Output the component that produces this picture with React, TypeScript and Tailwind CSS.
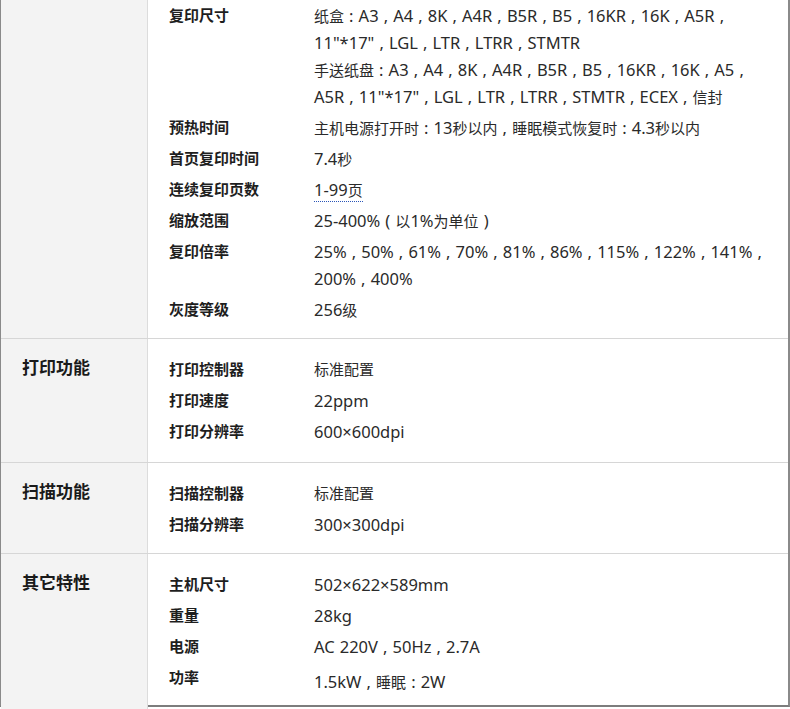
import React from 'react';

// ─── Data ─────────────────────────────────────────────────────────────────────

type Row = { label: string; lines: string[]; dotted?: boolean; nudge?: boolean };
type Section = { title?: string; rows: Row[]; pb: string };

const SECTIONS: Section[] = [
  {
    pb: 'pb-[13px]',
    rows: [
      {
        label: '复印尺寸',
        lines: [
          '纸盒 : A3 , A4 , 8K , A4R , B5R , B5 , 16KR , 16K , A5R ,',
          '11"*17" , LGL , LTR , LTRR , STMTR',
          '手送纸盘 : A3 , A4 , 8K , A4R , B5R , B5 , 16KR , 16K , A5 ,',
          'A5R , 11"*17" , LGL , LTR , LTRR , STMTR , ECEX , 信封',
        ],
      },
      { label: '预热时间', lines: ['主机电源打开时 : 13秒以内 , 睡眠模式恢复时 : 4.3秒以内'] },
      { label: '首页复印时间', lines: ['7.4秒'] },
      { label: '连续复印页数', lines: ['1-99页'], dotted: true },
      { label: '缩放范围', lines: ['25-400% ( 以1%为单位 )'] },
      {
        label: '复印倍率',
        lines: ['25% , 50% , 61% , 70% , 81% , 86% , 115% , 122% , 141% ,', '200% , 400%'],
      },
      { label: '灰度等级', lines: ['256级'] },
    ],
  },
  {
    title: '打印功能',
    pb: 'pb-[15px]',
    rows: [
      { label: '打印控制器', lines: ['标准配置'] },
      { label: '打印速度', lines: ['22ppm'] },
      { label: '打印分辨率', lines: ['600×600dpi'] },
    ],
  },
  {
    title: '扫描功能',
    pb: 'pb-[13px]',
    rows: [
      { label: '扫描控制器', lines: ['标准配置'] },
      { label: '扫描分辨率', lines: ['300×300dpi'] },
    ],
  },
  {
    title: '其它特性',
    pb: 'pb-[12px]',
    rows: [
      { label: '主机尺寸', lines: ['502×622×589mm'] },
      { label: '重量', lines: ['28kg'] },
      { label: '电源', lines: ['AC 220V , 50Hz , 2.7A'] },
      { label: '功率', lines: ['1.5kW , 睡眠 : 2W'], nudge: true },
    ],
  },
];

// ─── Helpers ──────────────────────────────────────────────────────────────────

// Latin runs are set a touch larger than the CJK ones, as in the reference
function Mixed({ text }: { text: string }) {
  const parts = text.split(/([\u4e00-\u9fff]+)/).filter(Boolean);
  return (
    <>
      {parts.map((p, i) =>
        /[\u4e00-\u9fff]/.test(p) ? (
          <span key={i} className="text-[15px]">
            {p}
          </span>
        ) : (
          <span key={i} className="text-[16.5px] [word-spacing:0.8px]">
            {p}
          </span>
        ),
      )}
    </>
  );
}

function SpecRow({ row }: { row: Row }) {
  return (
    <div className="flex py-[2px]">
      <div className="w-[145px] shrink-0 h-[27px] leading-[27px] font-bold text-[15px] text-[#1e1e1e]">
        {row.label}
      </div>
      <div className={`text-[#2a2a2a] whitespace-nowrap ${row.nudge ? 'pt-1' : ''}`}>
        {row.lines.map((line, i) => (
          <div key={i} className="h-[27px] leading-[27px]">
            {row.dotted ? (
              <span className="border-b border-dotted border-[#2b56b8]">
                <Mixed text={line} />
              </span>
            ) : (
              <Mixed text={line} />
            )}
          </div>
        ))}
      </div>
    </div>
  );
}

// ─── Component ────────────────────────────────────────────────────────────────

export default function App() {
  return (
    <div className="w-[790px] h-[709px] overflow-hidden bg-white font-['Noto_Sans','Noto_Sans_CJK_SC',sans-serif]">
      <div className="w-[790px] h-[707px] border-l border-r-2 border-b-2 border-l-[#8a8a8a] border-r-[#8a8a8a] border-b-[#7d7d7d] flex flex-col">
        {SECTIONS.map((section, si) => (
          <div
            key={si}
            className={`flex ${si > 0 ? 'border-t border-[#d6d6d6]' : ''} ${si === SECTIONS.length - 1 ? 'flex-1' : ''}`}
          >
            <div className="w-[147px] shrink-0 bg-[#f3f3f3] border-r border-[#dcdcdc] pl-[21px]">
              {section.title && (
                <div className="mt-[15px] h-[27px] leading-[27px] text-[17px] font-bold text-[#1a1a1a]">
                  {section.title}
                </div>
              )}
            </div>
            <div className={`flex-1 pl-[21px] ${si > 0 ? 'pt-[15px]' : 'pt-0'} ${section.pb}`}>
              {section.rows.map((row, ri) => (
                <SpecRow key={ri} row={row} />
              ))}
            </div>
          </div>
        ))}
      </div>
    </div>
  );
}
